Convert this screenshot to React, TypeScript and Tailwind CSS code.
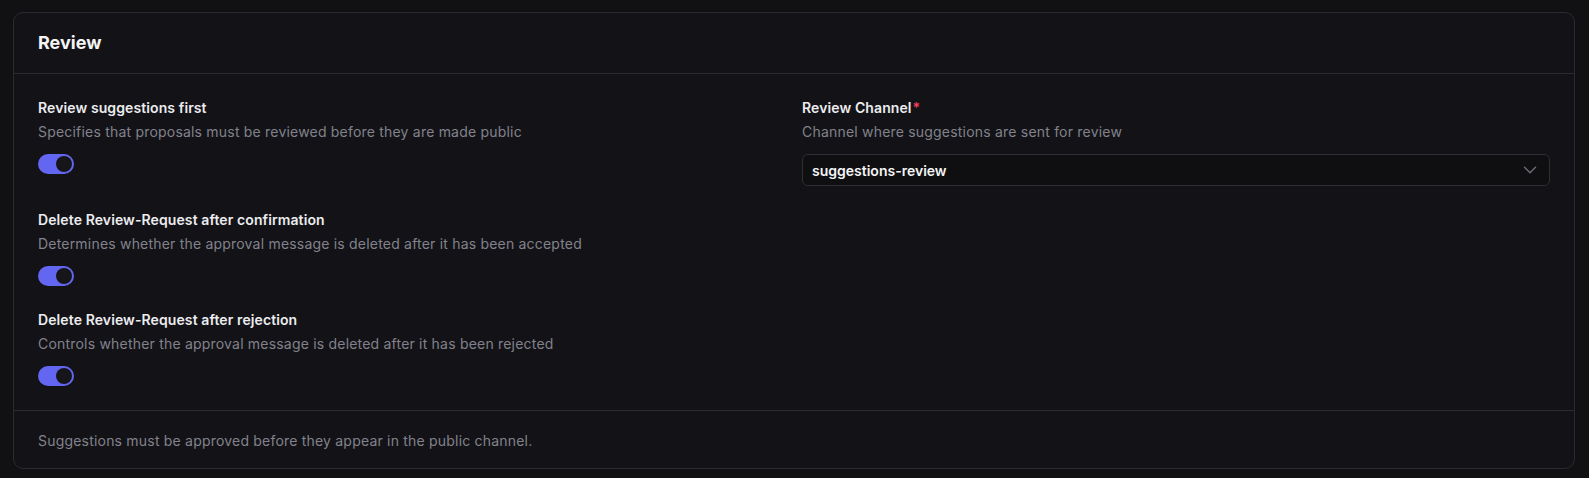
import React from "react";

function Toggle() {
  return (
    <div className="mt-[12px] flex h-[20px] w-[36px] items-center justify-end rounded-full bg-[#6366f1] px-[2px]">
      <div className="h-[16px] w-[16px] rounded-full bg-[#16161a]" />
    </div>
  );
}

function Field({ label, desc, required }: { label: string; desc: string; required?: boolean }) {
  return (
    <>
      <div className="text-[14px] leading-[20px] font-semibold tracking-[0.1px] text-[#ececef]">
        {label}
        {required && <span className="ml-[1px] text-[#f43f5e]">*</span>}
      </div>
      <div className="mt-1 text-[14px] leading-[20px] tracking-[0.2px] text-[#82828c]">{desc}</div>
    </>
  );
}

export default function App() {
  return (
    <div
      className="min-h-[478px] bg-[#111113] pl-[13px] pr-[14px] pt-[12px] pb-[11px]"
      style={{ fontFamily: "Inter, 'Noto Sans', sans-serif" }}
    >
      <div className="rounded-[10px] border border-[#2a2a2f] bg-[#131317]">
        <div className="border-b border-[#2a2a2f] px-6 py-4">
          <h2 className="text-[18px] leading-[28px] font-bold text-[#f4f4f5]">Review</h2>
        </div>
        <div className="grid grid-cols-2 gap-x-4 gap-y-6 px-6 pt-6 pb-6">
          <div>
            <Field
              label="Review suggestions first"
              desc="Specifies that proposals must be reviewed before they are made public"
            />
            <Toggle />
          </div>
          <div>
            <Field label="Review Channel" desc="Channel where suggestions are sent for review" required />
            <div className="mt-[12px] flex h-[32px] items-center justify-between rounded-md border border-[#2e2e34] bg-[#0f0f12] pl-[9px] pr-[8px]">
              <span className="text-[14px] font-semibold text-[#f4f4f5]">suggestions-review</span>
              <svg width="22" height="22" viewBox="0 0 24 24" fill="none" stroke="#6b6b74" strokeWidth="1.6" strokeLinecap="round" strokeLinejoin="round">
                <path d="m6 9 6 6 6-6" />
              </svg>
            </div>
          </div>
          <div>
            <Field
              label="Delete Review-Request after confirmation"
              desc="Determines whether the approval message is deleted after it has been accepted"
            />
            <Toggle />
          </div>
          <div />
          <div>
            <Field
              label="Delete Review-Request after rejection"
              desc="Controls whether the approval message is deleted after it has been rejected"
            />
            <Toggle />
          </div>
          <div />
        </div>
        <div className="border-t border-[#2a2a2f] px-6 pt-5 pb-[17px]">
          <p className="text-[14px] leading-[20px] tracking-[0.2px] text-[#82828c]">
            Suggestions must be approved before they appear in the public channel.
          </p>
        </div>
      </div>
    </div>
  );
}
